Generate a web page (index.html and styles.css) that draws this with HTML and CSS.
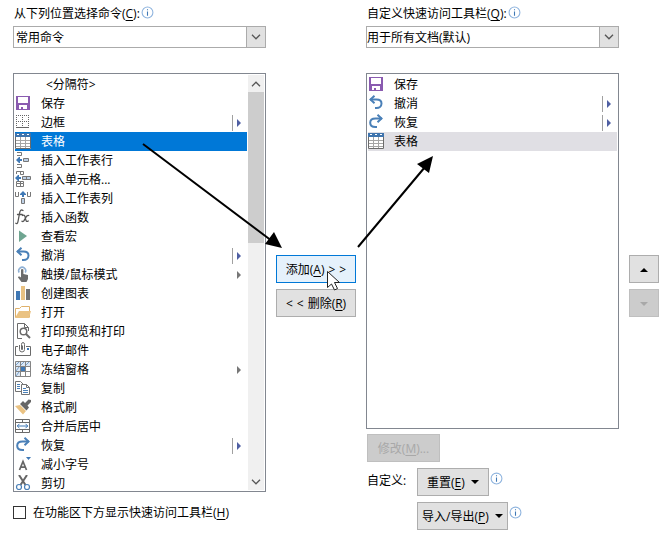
FILE: index.html
```html
<!DOCTYPE html>
<html lang="zh-CN">
<head>
<meta charset="utf-8">
<title>自定义快速访问工具栏</title>
<link rel="stylesheet" href="styles.css">
</head>
<body>
<svg class="sprite" aria-hidden="true">
  <symbol id="i-save" viewBox="0 0 16 16"><path fill="#8a5bb0" fill-rule="evenodd" d="M1 1h14v14H1zM3 2v6h10V2zM4 10v4h2v-2h2v2h4v-4z"/></symbol>
  <symbol id="i-border" viewBox="0 0 16 16"><path fill="none" stroke="#666" stroke-dasharray="1 1" d="M1 1.500h13M1 7.500h13M1.500 1v12M7.500 1v12M13.500 1v12"/><path stroke="#666" d="M1 13.500h13"/></symbol>
  <symbol id="i-table" viewBox="0 0 16 16"><path fill="#fff" d="M0 0h16v16H0z"/><path fill="none" stroke="#a5a5a5" d="M1 7.500h14M1 10.500h14M1 13.500h14M5.500 4v11M10.500 4v11"/><path fill="none" stroke="#6b6b6b" d="M.5.500h15v15H.5z"/><path fill="#3f74ad" d="M0 0h16v4H0z"/><path fill="#fff" d="M2 1h2v1H2zM7 1h2v1H7zM12 1h2v1h-2z"/></symbol>
  <symbol id="i-row" viewBox="0 0 16 16"><path fill="none" stroke="#777" d="M2 .5h4.500v3H2M2 12.500h4.500v3H2"/><path fill="#bdd0e6" stroke="#777" d="M8.500 6.500h5v3h-5z"/><path fill="#3f78b5" d="M1 8l3-3h1v2h2v2H5v2H4z"/></symbol>
  <symbol id="i-cell" viewBox="0 0 16 16"><path fill="none" stroke="#777" d="M1.500 3V.5h7v3h-3M5.500.5v3M1.500 12.500h7v3h-7zM5.500 10v5.500M1.500 12.500v-2h7v2"/><path fill="#bdd0e6" stroke="#777" d="M7.500 5.500h8v3h-8zM11.500 5.500v3"/><path fill="#3f78b5" d="M0 7l3-3h1v2h2v2H4v2H3z"/></symbol>
  <symbol id="i-col" viewBox="0 0 16 16"><path fill="none" stroke="#777" d="M.5 2v4.500h3V2M12.500 2v4.500h3V2"/><path fill="#bdd0e6" stroke="#777" d="M6.500 8.500h3v5h-3z"/><path fill="#3f78b5" d="M8 1l3 3v1H9v2H7V5H5V4z"/></symbol>
  <symbol id="i-fx" viewBox="0 0 16 16"><path fill="none" stroke="#555" stroke-width="1.300" stroke-linecap="round" d="M8 1.500c-2-1.300-3 0-3.500 3L3 12.500c-.4 2-1.200 2.500-2.200 1.800M2.500 5.500h4.700M7.500 6.500c2-1 2.500.2 3 3s1 3.500 2.800 2.500M13.700 6.500c-1.700-.8-2.500 1-3.500 3s-1.700 3.700-3.300 2.800"/></symbol>
  <symbol id="i-play" viewBox="0 0 16 16"><path fill="#6fa591" d="M4 2.500l8 5.500-8 6z"/></symbol>
  <symbol id="i-undo" viewBox="0 0 16 16"><path fill="none" stroke="#4a80b8" stroke-width="2" d="M2 4.500h6.500c3 0 5 1.500 5 4s-2 4.500-5 4.500H7"/><path fill="none" stroke="#4a80b8" stroke-width="2" d="M6.500.8L2.500 4.500l4 3.700"/></symbol>
  <symbol id="i-redo" viewBox="0 0 16 16"><path fill="none" stroke="#4a80b8" stroke-width="2" d="M14 4.500H7.500c-3 0-5.300 1.500-5.300 4.200S4.500 13 7.500 13H9"/><path fill="none" stroke="#4a80b8" stroke-width="2" d="M9.500.8l4 3.700-4 3.700"/></symbol>
  <symbol id="i-touch" viewBox="0 0 16 16"><path fill="none" stroke="#8fb0d4" stroke-width="1.600" d="M4.200 6.500a3.500 3.500 0 1 1 6 0"/><path fill="#6b6b6b" d="M6 3.500q1.200-1 2.400 0V8l4.600 1v4l-1.500 3H6.500L3 11.500q0-1.500 1.500-1L6 11.500z"/></symbol>
  <symbol id="i-chart" viewBox="0 0 16 16"><path fill="#3f78b5" d="M1 6h4v9H1z"/><path fill="#eac282" d="M6 1h4v14H6z"/><path fill="#737373" d="M11 4h4v11h-4z"/></symbol>
  <symbol id="i-open" viewBox="0 0 16 16"><path fill="#fff" stroke="#dfb16b" d="M.5 13.500V4.500h4l2-2h8v11"/><path fill="#eac282" d="M0 14l4-7h12l-2 7z"/></symbol>
  <symbol id="i-preview" viewBox="0 0 16 16"><path fill="none" stroke="#6b6b6b" d="M7 15.500H2.500V.5h7l4 4V8M9.500.5v4h4"/><circle cx="8.500" cy="8.500" r="3.300" fill="#fff" stroke="#6b6b6b" stroke-width="1.500"/><path stroke="#6b6b6b" stroke-width="2" d="M11 11l4 4"/></symbol>
  <symbol id="i-mail" viewBox="0 0 16 16"><path fill="none" stroke="#6b6b6b" d="M3 4.500H.5v9h15v-9H11"/><path fill="none" stroke="#6b6b6b" d="M4.500 3v4.500a2.500 2.500 0 0 0 5 0V2.500a1.500 2 0 0 0-3 0v5q.5 1 1 0V3.500"/><path fill="#3f78b5" d="M12 6h2v2h-2z"/></symbol>
  <symbol id="i-freeze" viewBox="0 0 16 16"><path fill="#dce8f5" d="M0 0h16v5H0zM0 5h5v11H0z"/><path fill="none" stroke="#858585" d="M.5.500h15v15H.5zM.5 5.500h15M.5 10.500h15M5.500.5v15M10.500.5v15"/><path stroke="#7ba2cc" d="M1 4l3-3M6 4l3-3M11 4l3-3M1 10l3-4M1 15l3-4"/><path fill="#3f78b5" d="M6 6h4v4H6z"/></symbol>
  <symbol id="i-copy" viewBox="0 0 16 16"><path fill="#fff" stroke="#737373" d="M.5 1.500h5l3 3v7h-8z"/><path fill="#fff" stroke="#737373" d="M6.500 4.500h5l3 3v7h-8zM11.500 4.500v3h3"/><path stroke="#4a80b8" d="M2 4.500h3M2 6.500h3M2 8.500h3M8 8.500h3M8 10.500h5M8 12.500h5"/></symbol>
  <symbol id="i-brush" viewBox="0 0 16 16"><path fill="#eac282" d="M0 7l5-1 6 6-3 3.500z"/><path fill="#666" d="M5 5l3-3 2 2 3.500-3.500L16 1v2l-3.500 3.500L14 8.500l-2.500 3z"/></symbol>
  <symbol id="i-merge" viewBox="0 0 16 16"><path fill="none" stroke="#6b6b6b" d="M.5 1.500h14v13H.5zM.5 4.500h14M.5 11.500h14M7.500 1.500v3M7.500 11.500v3"/><path fill="none" stroke="#3f78b5" d="M2 8h11M4.500 5.800L2.300 8l2.200 2.200M10.500 5.800L12.700 8l-2.200 2.200"/></symbol>
  <symbol id="i-shrink" viewBox="0 0 16 16"><path fill="none" stroke="#666" stroke-width="1.700" d="M4.500 14L8 5.500 11.500 14M5.500 11.200h5"/><path fill="#3f78b5" d="M11 1h5l-2.500 3z"/></symbol>
  <symbol id="i-cut" viewBox="0 0 16 16"><path stroke="#666" stroke-width="2" d="M4 0l6.500 10M12 0L5.500 10"/><circle cx="4" cy="12" r="2.500" fill="#fff" stroke="#4a80b8" stroke-width="1.200"/><circle cx="12" cy="12" r="2.500" fill="#fff" stroke="#4a80b8" stroke-width="1.200"/></symbol>
  <symbol id="i-info" viewBox="0 0 12 12"><circle cx="6" cy="6" r="5" fill="#fff" stroke="#8fb4de"/><path fill="#3f78b5" d="M5.500 3h1v1h-1zM5.500 5h1v4h-1z"/></symbol>
  <symbol id="i-chev" viewBox="0 0 10 6"><path fill="none" stroke="#555" stroke-width="1.300" d="M1 .8l4 4 4-4"/></symbol>
</svg>

<main class="dialog">
  <section class="column">
    <div class="caption"><label for="source">从下列位置选择命令(<u>C</u>):</label><svg class="info"><use href="#i-info"/></svg></div>
    <div class="picker"><select id="source"><option>常用命令</option></select><span class="drop"><svg><use href="#i-chev"/></svg></span></div>
    <div class="list commands">
      <ul role="listbox" aria-label="常用命令">
        <li class="plain" role="option">&lt;分隔符&gt;</li>
        <li role="option"><svg><use href="#i-save"/></svg>保存</li>
        <li role="option" class="split"><svg><use href="#i-border"/></svg>边框</li>
        <li role="option" class="selected" aria-selected="true"><svg><use href="#i-table"/></svg>表格</li>
        <li role="option"><svg><use href="#i-row"/></svg>插入工作表行</li>
        <li role="option"><svg><use href="#i-cell"/></svg>插入单元格...</li>
        <li role="option"><svg><use href="#i-col"/></svg>插入工作表列</li>
        <li role="option"><svg><use href="#i-fx"/></svg>插入函数</li>
        <li role="option"><svg><use href="#i-play"/></svg>查看宏</li>
        <li role="option" class="split"><svg><use href="#i-undo"/></svg>撤消</li>
        <li role="option" class="more"><svg><use href="#i-touch"/></svg>触摸/鼠标模式</li>
        <li role="option"><svg><use href="#i-chart"/></svg>创建图表</li>
        <li role="option"><svg><use href="#i-open"/></svg>打开</li>
        <li role="option"><svg><use href="#i-preview"/></svg>打印预览和打印</li>
        <li role="option"><svg><use href="#i-mail"/></svg>电子邮件</li>
        <li role="option" class="more"><svg><use href="#i-freeze"/></svg>冻结窗格</li>
        <li role="option"><svg><use href="#i-copy"/></svg>复制</li>
        <li role="option"><svg><use href="#i-brush"/></svg>格式刷</li>
        <li role="option"><svg><use href="#i-merge"/></svg>合并后居中</li>
        <li role="option" class="split"><svg><use href="#i-redo"/></svg>恢复</li>
        <li role="option"><svg><use href="#i-shrink"/></svg>减小字号</li>
        <li role="option"><svg><use href="#i-cut"/></svg>剪切</li>
      </ul>
      <div class="scrollbar">
        <button type="button" class="up" aria-label="向上滚动"><svg><use href="#i-chev"/></svg></button>
        <div class="thumb"></div>
        <button type="button" class="down" aria-label="向下滚动"><svg><use href="#i-chev"/></svg></button>
      </div>
    </div>
    <div class="below"><input type="checkbox" id="under"><label for="under">在功能区下方显示快速访问工具栏(<u>H</u>)</label></div>
  </section>

  <div class="actions">
    <button type="button" class="btn move hot"><span>添加(<u>A</u>)</span><span>&gt;</span><span>&gt;</span></button>
    <button type="button" class="btn move"><span>&lt;</span><span>&lt;</span><span>删除(<u>R</u>)</span></button>
  </div>

  <section class="column">
    <div class="caption"><label for="target">自定义快速访问工具栏(<u>Q</u>):</label><svg class="info"><use href="#i-info"/></svg></div>
    <div class="picker"><select id="target"><option>用于所有文档(默认)</option></select><span class="drop"><svg><use href="#i-chev"/></svg></span></div>
    <div class="list toolbar">
      <ul role="listbox" aria-label="快速访问工具栏">
        <li role="option"><svg><use href="#i-save"/></svg>保存</li>
        <li role="option" class="split"><svg><use href="#i-undo"/></svg>撤消</li>
        <li role="option" class="split"><svg><use href="#i-redo"/></svg>恢复</li>
        <li role="option" class="current"><svg><use href="#i-table"/></svg>表格</li>
      </ul>
    </div>
    <div class="footer">
      <button type="button" class="btn modify" disabled>修改(<u>M</u>)...</button>
      <span class="custom">自定义:</span>
      <div class="line"><button type="button" class="btn menu">重置(<u>E</u>)<i class="tri"></i></button><svg class="info"><use href="#i-info"/></svg></div>
      <div class="line second"><button type="button" class="btn menu tight">导入/导出(<u>P</u>)<i class="tri"></i></button><svg class="info"><use href="#i-info"/></svg></div>
    </div>
  </section>

  <div class="actions">
    <button type="button" class="btn" aria-label="上移"><i class="tri flip"></i></button>
    <button type="button" class="btn" aria-label="下移" disabled><i class="tri"></i></button>
  </div>

  <svg class="overlay" viewBox="0 0 667 537" aria-hidden="true">
    <path stroke="#000" stroke-width="2" d="M143 144l129 97M358 247l67-80"/>
    <path d="M282 248l-17-4 9-12zM433 156l-4 17-12-9z"/>
    <path fill="#fff" stroke="#222" d="M327.500 271.500v16l4-3.500 3 6 3-1.500-3-6h5z"/>
  </svg>
</main>
</body>
</html>
```

FILE: styles.css
```css
* { box-sizing: border-box; }
body {
  margin: 0;
  background: #fff;
  color: #000;
  font: 12px/19px "Open Sans", "Noto Sans CJK SC", sans-serif;
}
button, select, input { font: inherit; color: inherit; margin: 0; }
u { text-underline-offset: 2px; }
.sprite { position: absolute; width: 0; height: 0; }
.dialog {
  position: relative;
  display: grid;
  grid-template-columns: 1fr 80px 1fr 30px;
  gap: 10px;
  padding: 4px 8px 7px 13px;
}
.overlay { position: absolute; top: 0; left: 0; width: 667px; height: 537px; pointer-events: none; }
.column { min-width: 0; }

.caption { display: flex; gap: 1px; padding-left: 1px; height: 22px; }
.info { width: 13px; height: 13px; margin-top: 2px; }

.picker { position: relative; height: 22px; }
.picker select {
  appearance: none;
  width: 100%;
  height: 22px;
  padding: 0 24px 0 2px;
  border: 1px solid #ababab;
  border-radius: 0;
  background: #fff;
}
#target { padding-left: 0; }
.drop {
  position: absolute;
  top: 0;
  right: 0;
  display: grid;
  place-items: center;
  width: 20px;
  height: 22px;
  border: 1px solid #ababab;
  background: #e1e1e1;
  pointer-events: none;
}
.drop svg, .scrollbar svg { width: 10px; height: 6px; }
.scrollbar svg { stroke: #555; }

.list {
  display: flex;
  margin-top: 25px;
  padding: 1px;
  border: 1px solid #828790;
  overflow: hidden;
}
.commands { height: 419px; }
.toolbar { height: 356px; }
.list ul { flex: 1; margin: 0; padding: 0; list-style: none; }
.list li { display: flex; align-items: center; height: 19px; }
.list li svg { width: 16px; height: 16px; margin: 0 10px 1px 0; }
.list .plain { padding-left: 31px; }
.list .selected { background: #0078d7; color: #fff; }
.list .current { background: #e0dfe4; }
.split::before, .more::before {
  content: "";
  order: 2;
  height: 16px;
  margin-left: auto;
}
.split::before { border-left: 1px solid #a0a0a0; }
.split::after, .more::after {
  content: "";
  order: 3;
  margin: 0 6px 0 4px;
  border: solid transparent;
  border-width: 4px 0 4px 4px;
  border-left-color: #4f5fa3;
}
.more::after { border-left-color: #777; }

.scrollbar { display: flex; flex-direction: column; width: 16px; margin-left: 1px; background: #f0f0f0; }
.scrollbar button {
  display: grid;
  place-items: center;
  height: 17px;
  padding: 0;
  border: 0;
  background: #f0f0f0;
}
.thumb { height: 151px; background: #cdcdcd; }
.up svg { transform: rotate(180deg); }
.scrollbar .down { margin-top: auto; }

.below { display: flex; align-items: center; gap: 7px; margin-top: 11px; }
.below input {
  appearance: none;
  width: 13px;
  height: 13px;
  border: 1px solid #333;
  background: #fff;
}

.actions { display: flex; flex-direction: column; gap: 6px; padding-top: 251px; }
.btn {
  height: 28px;
  padding: 0;
  border: 1px solid #adadad;
  background: #e1e1e1;
  white-space: nowrap;
}
.move { display: flex; align-items: center; justify-content: center; gap: 4px; }
.hot { border-color: #0078d7; background: #e5f1fb; }
.btn:disabled { border-color: #bfbfbf; background: #ccc; color: #a8a8a8; }
.tri {
  display: inline-block;
  border: solid transparent;
  border-width: 4px 4px 0;
  border-top-color: currentColor;
  vertical-align: middle;
}
.flip { transform: rotate(180deg); }

.footer {
  display: grid;
  grid-template-columns: 50px 1fr;
  gap: 6px 0;
  padding: 5px 0 0 1px;
}
.modify { grid-column: 1 / 3; justify-self: start; width: 73px; }
.custom { padding-top: 3px; }
.line { display: flex; gap: 1px; }
.line .info { margin-top: 4px; }
.second { grid-column: 2; }
.menu { padding: 0 9px; }
.tight { padding: 0 4px; }
.menu .tri { margin-left: 6px; margin-bottom: 2px; }
```
